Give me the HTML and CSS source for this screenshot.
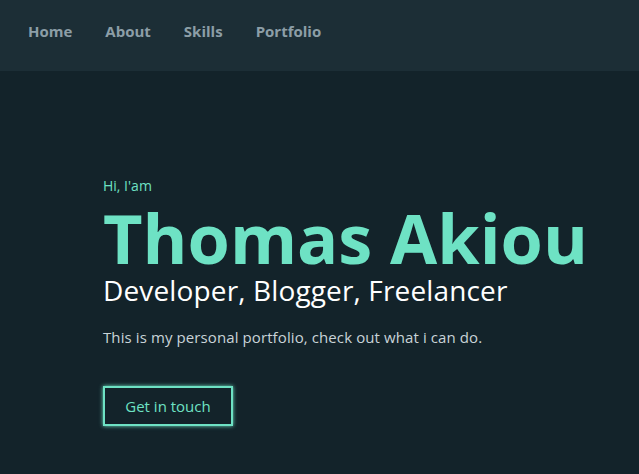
FILE: index.html
```html
<!DOCTYPE html>
<html lang="en">
<head>
<meta charset="utf-8">
<title>Thomas Akiou</title>
<link rel="stylesheet" href="styles.css">
</head>
<body>
<header class="topbar">
  <nav class="nav">
    <a href="#" class="nav-link">Home</a>
    <a href="#" class="nav-link">About</a>
    <a href="#" class="nav-link">Skills</a>
    <a href="#" class="nav-link">Portfolio</a>
  </nav>
</header>
<main class="hero">
  <p class="greet">Hi, I'am</p>
  <h1 class="name">Thomas Akiou</h1>
  <h2 class="roles">Developer, Blogger, Freelancer</h2>
  <p class="intro">This is my personal portfolio, check out what i can do.</p>
  <a href="#" class="cta">Get in touch</a>
</main>
</body>
</html>
```
FILE: styles.css
```css
* { box-sizing: border-box; }
html, body { margin: 0; padding: 0; }
body {
  background: #13232a;
  font-family: "Open Sans", "Noto Sans", sans-serif;
  height: 474px;
  overflow: hidden;
}
.topbar {
  background: #1c2e36;
  height: 71px;
  display: flex;
  align-items: flex-start;
  padding: 20px 0 0 28px;
}
.nav {
  display: flex;
  gap: 33px;
}
.nav-link {
  color: #8c9ea7;
  font-weight: 700;
  font-size: 15px;
  line-height: 22px;
  text-decoration: none;
}
.hero {
  padding: 105px 0 0 103px;
}
.greet {
  margin: 0;
  color: #6ee2c4;
  font-size: 14px;
  line-height: 20px;
}
.name {
  margin: 7px 0 0;
  color: #6ee2c4;
  font-size: 68.4px;
  font-weight: 700;
  line-height: 70px;
}
.roles {
  margin: 0;
  color: #ffffff;
  font-size: 28px;
  font-weight: 400;
  line-height: 34px;
  letter-spacing: 0.14px;
}
.intro {
  margin: 20px 0 0;
  color: #c9d3d8;
  font-size: 15px;
  line-height: 21px;
  letter-spacing: 0.1px;
}
.cta {
  display: inline-block;
  margin-top: 38px;
  width: 130px;
  height: 40px;
  line-height: 36px;
  text-align: center;
  border: 2px solid #6ee2c4;
  box-shadow: 0 0 4px #6ee2c4;
  color: #6ee2c4;
  font-size: 15px;
  text-decoration: none;
}
```
